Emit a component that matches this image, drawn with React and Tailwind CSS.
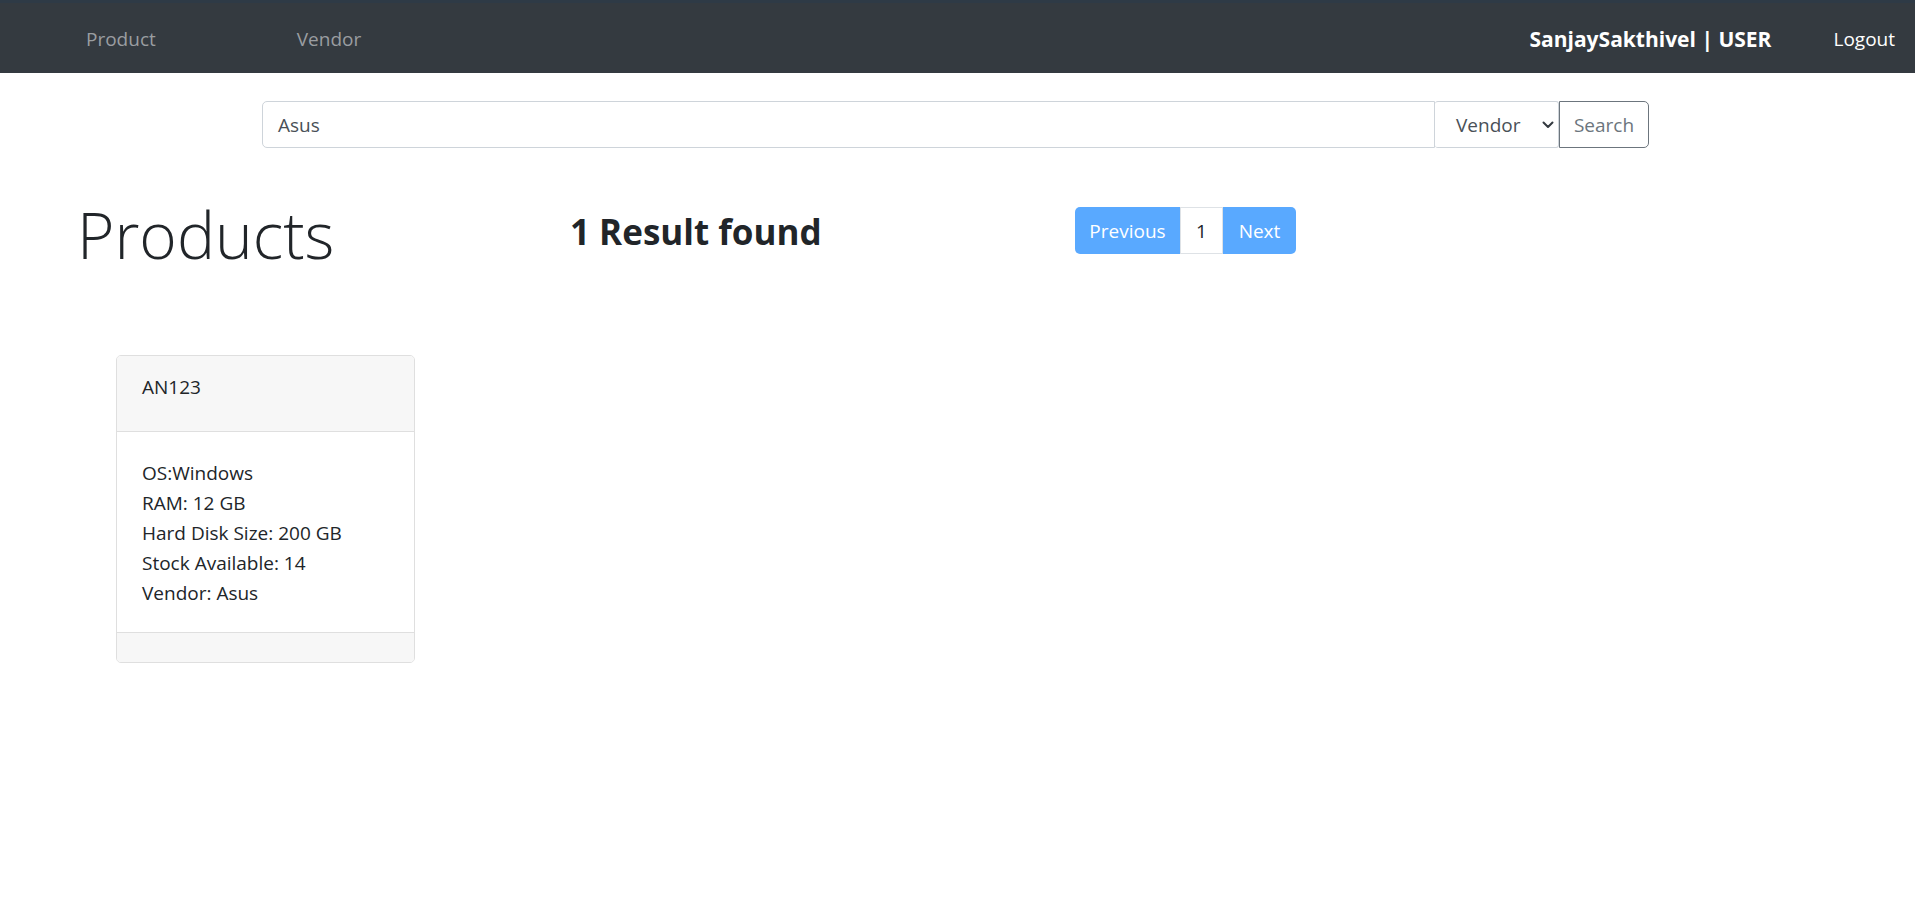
import React from "react";

function Chevron() {
  return (
    <svg width="12" height="8" viewBox="0 0 12 8" className="absolute right-[4px] top-1/2 -translate-y-1/2">
      <path d="M1.5 1.5 L6 6 L10.5 1.5" fill="none" stroke="#343a40" strokeWidth="2" strokeLinecap="round" strokeLinejoin="round" />
    </svg>
  );
}

export default function App() {
  return (
    <div className="min-h-[912px] bg-white text-[#212529] text-[19px] leading-[30px]" style={{ fontFamily: "'Open Sans', sans-serif" }}>
      <nav className="h-[73px] bg-[#343a40] border-t-[3px] border-[#2e3a46] flex items-center pt-[1px]">
        <a className="ml-[86px] text-[#9a9da1]">Product</a>
        <a className="ml-[141px] text-[#9a9da1]">Vendor</a>
        <div className="ml-auto font-bold text-white text-[21px]">SanjaySakthivel | USER</div>
        <a className="ml-[62px] mr-[20px] text-white">Logout</a>
      </nav>

      <div className="flex mt-[28px] pl-[262px]">
        <div className="flex w-[1387px] h-[47px]">
          <div className="flex-1 border border-[#ced4da] rounded-l-[5px] px-[15px] flex items-center text-[#495057]">Asus</div>
          <div className="relative w-[124px] border border-l-0 border-[#ced4da] rounded-[3px] flex items-center pl-[21px] text-[#495057]">
            Vendor
            <Chevron />
          </div>
          <div className="w-[90px] border border-[#6c757d] rounded-r-[5px] flex items-center justify-center text-[#6c757d]">Search</div>
        </div>
      </div>

      <div className="flex items-start mt-[55px]">
        <div className="w-[570px] pl-[77px] text-[64px] leading-[64px] font-light">Products</div>
        <div className="w-[505px] mt-[11px] text-[35px] leading-[35px] font-bold">1 Result found</div>
        <div className="flex h-[47px] mt-[4px]">
          <div className="w-[105px] bg-[#59a9ff] text-white rounded-l-[5px] flex items-center justify-center">Previous</div>
          <div className="w-[43px] border border-[#dee2e6] flex items-center justify-center">1</div>
          <div className="w-[73px] bg-[#59a9ff] text-white rounded-r-[5px] flex items-center justify-center">Next</div>
        </div>
      </div>

      <div className="ml-[116px] mt-[88px] w-[299px] border border-[#dfdfdf] rounded-[5px] overflow-hidden">
        <div className="bg-[#f7f7f7] border-b border-[#dfdfdf] px-[25px] pt-[16px] pb-[29px]">AN123</div>
        <div className="px-[25px] pt-[26px] pb-[24px]">
          <div>OS:Windows</div>
          <div>RAM: 12 GB</div>
          <div>Hard Disk Size: 200 GB</div>
          <div>Stock Available: 14</div>
          <div>Vendor: Asus</div>
        </div>
        <div className="bg-[#f7f7f7] border-t border-[#dfdfdf] h-[30px]"></div>
      </div>
    </div>
  );
}
